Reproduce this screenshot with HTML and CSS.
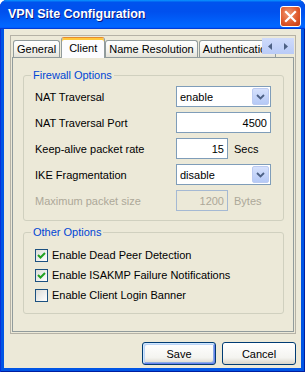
FILE: index.html
```html
<!DOCTYPE html>
<html lang="en">
<head>
    <meta charset="UTF-8">
    <title>VPN Site Configuration</title>
    <link rel="stylesheet" href="styles.css">
</head>
<body>

    <div class="window">

        <div class="titlebar">
            <span class="title">VPN Site Configuration</span>
            <button class="close" title="Close">
                <svg width="13" height="13" viewBox="0 0 13 13">
                    <path d="M2 2 L11 11 M11 2 L2 11" stroke="#fff" stroke-width="2.2" stroke-linecap="square"/>
                </svg>
            </button>
        </div>

        <div class="client">

            <div class="tabframe">
                <div class="tabs">
                    <div class="tab">General</div>
                    <div class="tab active">Client</div>
                    <div class="tab">Name Resolution</div>
                    <div class="tab">Authentication</div>

                    <div class="scroller">
                        <span class="scroll-btn">
                            <svg width="6" height="7" viewBox="0 0 6 7"><path d="M5 0 L5 7 L1 3.5 Z" fill="#4d6185"/></svg>
                        </span>
                        <span class="scroll-btn">
                            <svg width="6" height="7" viewBox="0 0 6 7"><path d="M1 0 L1 7 L5 3.5 Z" fill="#4d6185"/></svg>
                        </span>
                    </div>
                </div>

                <div class="pane">

                    <fieldset class="group">
                        <legend>Firewall Options</legend>

                        <div class="row">
                            <label>NAT Traversal</label>
                            <div class="combo">
                                <span class="combo-text">enable</span>
                                <span class="combo-btn">
                                    <svg width="9" height="6" viewBox="0 0 9 6"><path d="M1 1 L4.5 4.5 L8 1" fill="none" stroke="#4d6185" stroke-width="1.8"/></svg>
                                </span>
                            </div>
                        </div>

                        <div class="row">
                            <label>NAT Traversal Port</label>
                            <input class="field" type="text" value="4500">
                        </div>

                        <div class="row">
                            <label>Keep-alive packet rate</label>
                            <input class="field short" type="text" value="15">
                            <span class="unit">Secs</span>
                        </div>

                        <div class="row">
                            <label>IKE Fragmentation</label>
                            <div class="combo">
                                <span class="combo-text">disable</span>
                                <span class="combo-btn">
                                    <svg width="9" height="6" viewBox="0 0 9 6"><path d="M1 1 L4.5 4.5 L8 1" fill="none" stroke="#4d6185" stroke-width="1.8"/></svg>
                                </span>
                            </div>
                        </div>

                        <div class="row disabled">
                            <label>Maximum packet size</label>
                            <input class="field short" type="text" value="1200" disabled>
                            <span class="unit">Bytes</span>
                        </div>
                    </fieldset>

                    <fieldset class="group other">
                        <legend>Other Options</legend>

                        <div class="check">
                            <span class="box">
                                <svg width="11" height="11" viewBox="0 0 11 11"><path d="M2 5 L4.5 7.5 L9 3" fill="none" stroke="#21a121" stroke-width="2"/></svg>
                            </span>
                            Enable Dead Peer Detection
                        </div>
                        <div class="check">
                            <span class="box">
                                <svg width="11" height="11" viewBox="0 0 11 11"><path d="M2 5 L4.5 7.5 L9 3" fill="none" stroke="#21a121" stroke-width="2"/></svg>
                            </span>
                            Enable ISAKMP Failure Notifications
                        </div>
                        <div class="check">
                            <span class="box"></span>
                            Enable Client Login Banner
                        </div>
                    </fieldset>

                </div>
            </div>

            <div class="buttons">
                <button class="btn default">Save</button>
                <button class="btn">Cancel</button>
            </div>

        </div>
    </div>

</body>
</html>
```

FILE: styles.css
```css
* {
    box-sizing: border-box;
}

body {
    margin: 0;
    background: #fff;
    font: 11px "Liberation Sans", Arial, sans-serif;
    color: #000;
}

.window {
    width: 305px;
    height: 372px;
    display: flex;
    flex-direction: column;
    background: #0055e5;
    border-radius: 7px 7px 0 0;
    box-shadow: inset 1px 0 #0831d9, inset -1px 0 #001ea0, inset 0 -1px #001ea0;
}

/* title bar */
.titlebar {
    height: 29px;
    display: flex;
    align-items: flex-start;
    padding: 0 4px 0 8px;
    border-radius: 7px 7px 0 0;
    background: linear-gradient(180deg, #0997ff, #0053ee 8%, #0050ee 40%, #06f 88%, #06f 93%, #005bff 95%, #003dd7 96%, #003dd7);
}

.title {
    margin-top: 7px;
    color: #fff;
    font-weight: bold;
    font-size: 12.5px;
    text-shadow: 1px 1px #0a1883;
}

.close {
    margin-left: auto;
    margin-top: 6px;
    width: 21px;
    height: 21px;
    padding: 0;
    border: 1px solid #fff;
    border-radius: 3px;
    background: radial-gradient(circle at 40% 35%, #f09a75, #e05a2c 55%, #c4380f);
    display: flex;
    align-items: center;
    justify-content: center;
}

/* dialog body */
.client {
    flex: 1;
    margin: 0 4px 4px;
    background: #ece9d8;
    padding: 6px 5px 0 6px;
}

.tabframe {
    height: 299px;
    border: 1px solid #b5b2a6;
    padding: 1px;
    display: flex;
    flex-direction: column;
}

.tabs {
    position: relative;
    z-index: 1;
    height: 21px;
    margin-bottom: -1px;
    padding-left: 1px;
    display: flex;
    align-items: flex-end;
    overflow: hidden;
}

.tab {
    flex: none;
    height: 17px;
    margin-bottom: 1px;
    padding: 0 3px;
    line-height: 16px;
    white-space: nowrap;
    border: 1px solid #919b9c;
    border-bottom: none;
    border-radius: 3px 3px 0 0;
    background: linear-gradient(#fff, #f3f3ef 60%, #e4e2d8);
}

.tab + .tab {
    margin-left: 1px;
}

.tab.active {
    height: 21px;
    margin: 0 0 0 1px;
    padding: 2px 7px 0;
    border-top-color: #e68b2c;
    background: #fcfcfe;
    box-shadow: inset 0 2px #ffc83c;
}

.tab.active + .tab {
    margin-left: 0;
}

.scroller {
    position: absolute;
    top: 1px;
    right: 0;
    width: 32px;
    height: 16px;
    display: flex;
    background: #ece9d8;
}

.scroll-btn {
    flex: 1;
    display: flex;
    align-items: center;
    justify-content: center;
    background: linear-gradient(#cfdbfb, #b9cbf7);
}

.pane {
    flex: 1;
    border: 1px solid #919b9c;
    background: #ece9d8;
    padding: 11px 9px 0 10px;
}

/* group boxes */
.group {
    margin: 0;
    border: 1px solid #d0d0bf;
    border-radius: 3px;
    padding: 4px 9px 9px 11px;
}

.group legend {
    margin-left: -4px;
    padding: 0 2px;
    color: #0046d5;
    line-height: 13px;
}

.group.other {
    margin-top: 5px;
    padding: 6px 9px 8px 11px;
}

.row {
    display: flex;
    align-items: center;
    height: 21px;
    margin-bottom: 5px;
}

.row:last-child {
    margin-bottom: 0;
}

.row label {
    width: 141px;
    flex: none;
}

.combo {
    width: 95px;
    height: 21px;
    border: 1px solid #7f9db9;
    background: #fff;
    display: flex;
    align-items: center;
}

.combo-text {
    flex: 1;
    padding-left: 3px;
}

.combo-btn {
    width: 17px;
    height: 17px;
    margin-right: 1px;
    border: 1px solid #bccbf1;
    border-radius: 2px;
    background: linear-gradient(#d6e1fc, #b5c9f6);
    display: flex;
    align-items: center;
    justify-content: center;
}

.field {
    width: 95px;
    height: 21px;
    border: 1px solid #7f9db9;
    padding: 0 3px;
    text-align: right;
    font: inherit;
    color: #000;
    background: #fff;
}

.field.short {
    width: 52px;
}

.unit {
    margin-left: 6px;
}

.row.disabled {
    color: #aca899;
}

.row.disabled .field {
    background: #ece9d8;
    border-color: #a5b9d3;
    color: #aca899;
}

/* check boxes */
.check {
    height: 20px;
    display: flex;
    align-items: center;
    gap: 4px;
}

.box {
    width: 13px;
    height: 13px;
    border: 1px solid #1c5180;
    background: linear-gradient(135deg, #dcdcd7, #fff);
    display: flex;
    align-items: center;
    justify-content: center;
}

/* dialog buttons */
.buttons {
    display: flex;
    justify-content: flex-end;
    gap: 6px;
    margin-top: 8px;
}

.btn {
    width: 74px;
    height: 23px;
    padding: 0;
    border: 1px solid #003c74;
    border-radius: 3px;
    font: inherit;
    color: #000;
    background: linear-gradient(#fff, #f4f4f0 70%, #d8d4c9);
}

.btn.default {
    box-shadow: inset 1px 1px #cee7ff, inset -1px -1px #6982ee, inset 2px 2px #bcd4f6, inset -2px -2px #89ade4;
}
```
